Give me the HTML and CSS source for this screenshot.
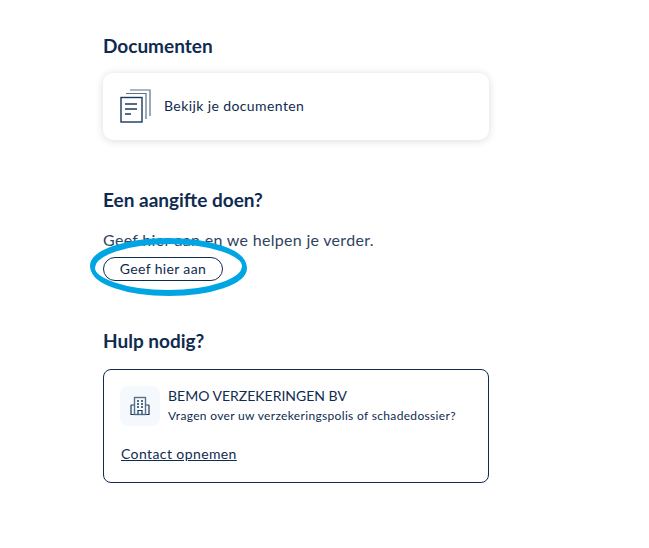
FILE: index.html
```html
<!DOCTYPE html>
<html lang="nl">
<head>
    <meta charset="UTF-8">
    <meta name="viewport" content="width=device-width, initial-scale=1.0">
    <title>Documenten</title>
    <link rel="stylesheet" href="styles.css">
</head>
<body>

    <main class="content">
        <section class="docs">
            <h2>Documenten</h2>
            <a class="doc-card" href="#">
                <svg class="doc-icon" width="32" height="34" viewBox="0 0 32 34" fill="none" stroke="#1b3a5f" stroke-width="1.2">
                    <path d="M10 1H30V27" stroke="#5b7089"/>
                    <path d="M6 4.5H26V30" stroke="#5b7089"/>
                    <rect x="1" y="8.5" width="21" height="24.5" fill="#fff" stroke-width="1.4"/>
                    <path d="M5 15H17M5 20H17M5 25H11" stroke-width="1.4"/>
                </svg>
                <span>Bekijk je documenten</span>
            </a>
        </section>

        <section class="claim">
            <h2>Een aangifte doen?</h2>
            <p>Geef hier aan en we helpen je verder.</p>
            <div class="claim-action">
                <a class="btn-outline" href="#">Geef hier aan</a>
                <svg class="ring" width="160" height="62" viewBox="0 0 160 62" fill="none" stroke="#00a5e3" stroke-width="4">
                    <ellipse cx="79" cy="29" rx="76" ry="26"/>
                    <ellipse cx="80" cy="31" rx="76" ry="26"/>
                </svg>
            </div>
        </section>

        <section class="help">
            <h2>Hulp nodig?</h2>
            <div class="help-card">
                <div class="help-top">
                    <div class="help-icon">
                        <svg width="20" height="20" viewBox="0 0 20 20" fill="none" stroke="#1b3a5f" stroke-width="1.2">
                            <path d="M1 9V18.5H19V9M1 9H4.5M19 9H15.5"/>
                            <rect x="4.5" y="1.5" width="11" height="17" stroke="#5b7089" stroke-width="1.4"/>
                            <path d="M7 5H9M11 5H13M7 8H9M11 8H13M7 11H9M11 11H13" stroke-width="1.4"/>
                            <path d="M8 18.5V14.5H12V18.5"/>
                        </svg>
                    </div>
                    <div class="help-text">
                        <div class="help-name">BEMO VERZEKERINGEN BV</div>
                        <div class="help-question">Vragen over uw verzekeringspolis of schadedossier?</div>
                    </div>
                </div>
                <a class="help-link" href="#">Contact opnemen</a>
            </div>
        </section>
    </main>

</body>
</html>
```

FILE: styles.css
```css
* {
    box-sizing: border-box;
    font-family: "Lato", "Noto Sans", sans-serif;
}
body {
    margin: 0;
    background: white;
    color: #0f2b50;
}
.content {
    width: 386px;
    margin-left: 103px;
    padding-top: 36px;
}
h2 {
    margin: 0;
    font-size: 19px;
    line-height: 20px;
    font-weight: 700;
    color: #0f2b50;
}
.doc-card {
    display: flex;
    align-items: center;
    gap: 12px;
    height: 67px;
    margin-top: 17px;
    padding: 0 0 2px 17px;
    background: white;
    border-radius: 10px;
    box-shadow: 0 1px 8px rgba(0, 0, 0, 0.14);
    color: #0f2b50;
    font-size: 14px;
    letter-spacing: 0.4px;
    text-decoration: none;
}
.doc-icon {
    flex-shrink: 0;
}
.claim {
    margin-top: 50px;
}
.claim p {
    margin: 20px 0 0;
    font-size: 16px;
    line-height: 20px;
    letter-spacing: 0.3px;
    color: #2f4362;
}
.claim-action {
    position: relative;
    margin-top: 7px;
}
.btn-outline {
    display: block;
    width: 120px;
    height: 24px;
    border: 1px solid #0f2b50;
    border-radius: 12px;
    font-size: 14px;
    line-height: 22px;
    letter-spacing: 0.35px;
    text-align: center;
    color: #0f2b50;
    text-decoration: none;
}
.ring {
    position: absolute;
    left: -14px;
    top: -20px;
}
.help {
    margin-top: 50px;
}
.help-card {
    margin-top: 18px;
    height: 114px;
    padding: 16px;
    border: 1px solid #0f2b50;
    border-radius: 8px;
}
.help-top {
    display: flex;
    align-items: center;
    gap: 8px;
}
.help-icon {
    display: flex;
    align-items: center;
    justify-content: center;
    width: 40px;
    height: 40px;
    background: #f5f9fd;
    border-radius: 8px;
}
.help-text {
    padding-bottom: 3px;
}
.help-name {
    font-size: 14px;
    line-height: 18px;
}
.help-question {
    margin-top: 3px;
    font-size: 12px;
    line-height: 15px;
    letter-spacing: 0.33px;
}
.help-link {
    display: block;
    margin-top: 19px;
    padding-left: 1px;
    font-size: 14px;
    line-height: 18px;
    letter-spacing: 0.4px;
    color: #0f2b50;
}
```
